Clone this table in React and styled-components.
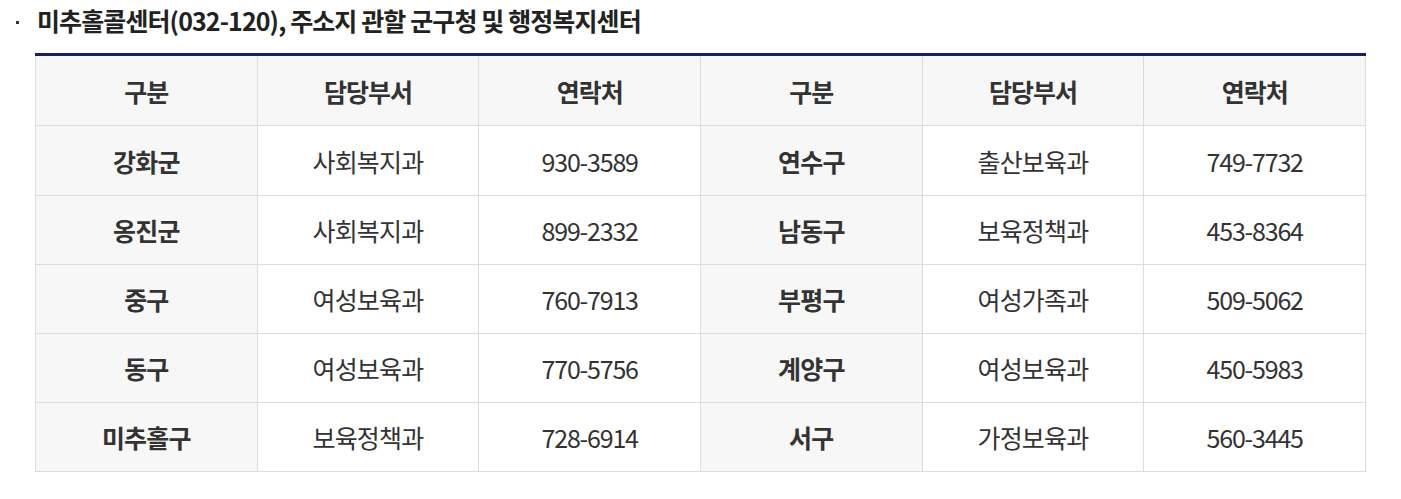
import React from "react";
import styled, { createGlobalStyle } from "styled-components";

const GlobalStyle = createGlobalStyle`
  body {
    margin: 0;
    background: #fff;
    font-family: "Noto Sans CJK KR", "Noto Sans", sans-serif;
    color: #333;
  }
`;

const StWrap = styled.div`
  padding: 4px 35px 0 16px;
`;

const StTitle = styled.h4`
  display: flex;
  align-items: center;
  gap: 18px;
  margin: 0;
  font-size: 25px;
  font-weight: 700;
  letter-spacing: -0.9px;
  color: #222;
  line-height: 32px;
`;

const StDot = styled.span`
  width: 3px;
  height: 3px;
  background: #333;
  margin-top: 4px;
`;

const StTable = styled.table`
  width: 1331px;
  margin: 17px 0 0 19px;
  border-collapse: collapse;
  table-layout: fixed;
  border-top: 3px solid #1b1f5f;
`;

const StTh = styled.th`
  height: 69px;
  padding: 0;
  border: 1px solid #ddd;
  border-top: 0;
  background: #f7f7f7;
  font-size: 25px;
  font-weight: 700;
  letter-spacing: -1px;
  color: #333;
`;

const StTd = styled.td`
  height: ${(props) => (props.$first ? "69px" : "68px")};
  padding: 0;
  border: 1px solid #ddd;
  text-align: center;
  font-size: 25px;
  letter-spacing: ${(props) => (props.$num ? "-1.2px" : "-0.8px")};
  font-weight: ${(props) => (props.$head ? 700 : 400)};
  background: ${(props) => (props.$head ? "#f7f7f7" : "#fff")};
  color: #333;
`;

const rows = [
  ["강화군", "사회복지과", "930-3589", "연수구", "출산보육과", "749-7732"],
  ["옹진군", "사회복지과", "899-2332", "남동구", "보육정책과", "453-8364"],
  ["중구", "여성보육과", "760-7913", "부평구", "여성가족과", "509-5062"],
  ["동구", "여성보육과", "770-5756", "계양구", "여성보육과", "450-5983"],
  ["미추홀구", "보육정책과", "728-6914", "서구", "가정보육과", "560-3445"],
];

const heads = ["구분", "담당부서", "연락처", "구분", "담당부서", "연락처"];

export default function App() {
  return (
    <StWrap>
      <GlobalStyle />
      <StTitle>
        <StDot />
        미추홀콜센터(032-120), 주소지 관할 군구청 및 행정복지센터
      </StTitle>
      <StTable>
        <thead>
          <tr>
            {heads.map((h, i) => (
              <StTh key={i}>{h}</StTh>
            ))}
          </tr>
        </thead>
        <tbody>
          {rows.map((r, ri) => (
            <tr key={r[0]}>
              {r.map((c, i) => (
                <StTd
                  key={i}
                  $head={i % 3 === 0}
                  $num={i % 3 === 2}
                  $first={ri === 0}
                >
                  {c}
                </StTd>
              ))}
            </tr>
          ))}
        </tbody>
      </StTable>
    </StWrap>
  );
}
